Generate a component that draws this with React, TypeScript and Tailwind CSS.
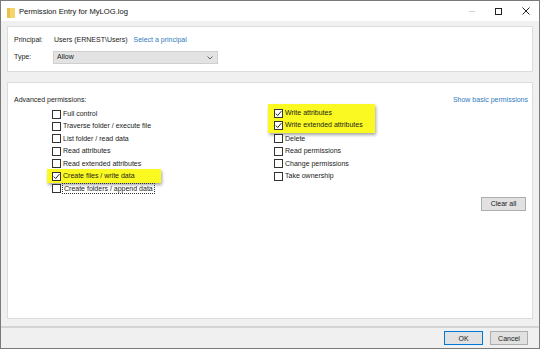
import React from 'react';

const leftPerms = [
  { label: 'Full control', checked: false },
  { label: 'Traverse folder / execute file', checked: false },
  { label: 'List folder / read data', checked: false },
  { label: 'Read attributes', checked: false },
  { label: 'Read extended attributes', checked: false },
  { label: 'Create files / write data', checked: true, mark: true },
  { label: 'Create folders / append data', checked: false, focus: true },
];

const rightTop = [
  { label: 'Write attributes', checked: true },
  { label: 'Write extended attributes', checked: true },
];

const rightRest = ['Delete', 'Read permissions', 'Change permissions', 'Take ownership'];

function Box({ checked }: { checked: boolean }) {
  return (
    <span className="w-[9px] h-[9px] border border-[#333333] bg-white flex items-center justify-center shrink-0">
      {checked && (
        <svg width="7" height="7" viewBox="0 0 7 7">
          <path d="M0.8 3.6 L2.7 5.5 L6.3 1.2" fill="none" stroke="#222" strokeWidth="1" />
        </svg>
      )}
    </span>
  );
}

function Row({ label, checked, focus }: { label: string; checked: boolean; focus?: boolean }) {
  return (
    <div className="h-[12.4px] flex items-center gap-[1px] whitespace-nowrap">
      <Box checked={checked} />
      <span className={focus ? 'border border-dotted border-[#333] leading-[9px] px-[1px]' : 'px-[1px]'}>{label}</span>
    </div>
  );
}

export default function App() {
  return (
    <div
      className="w-[540px] h-[349px] flex flex-col border border-[#7a7a7a] bg-[#f0f0f0] text-[7px] text-[#1a1a1a] overflow-hidden"
      style={{ fontFamily: '"Liberation Sans", Arial, sans-serif' }}
    >
      {/* title bar */}
      <div className="h-[20px] bg-white flex items-center shrink-0">
        <svg width="8" height="10" viewBox="0 0 8 10" className="ml-[6px] mt-[3px]">
          <rect x="0" y="0" width="8" height="10" fill="#f5d56b" />
          <rect x="0" y="0" width="3" height="10" fill="#e9c24a" />
        </svg>
        <span className="ml-[4px] mt-[2px] text-[7.6px] text-[#111]">Permission Entry for MyLOG.log</span>
        <div className="ml-auto flex items-center h-full">
          <div className="w-[27px] flex justify-center">
            <span className="w-[6px] h-px bg-[#d0d0d0]" />
          </div>
          <div className="w-[27px] flex justify-center">
            <span className="w-[7px] h-[7px] border border-[#222]" />
          </div>
          <div className="w-[27px] flex justify-center">
            <svg width="8" height="8" viewBox="0 0 8 8">
              <path d="M0.5 0.5 L7.5 7.5 M7.5 0.5 L0.5 7.5" stroke="#222" strokeWidth="1" />
            </svg>
          </div>
        </div>
      </div>

      {/* body */}
      <div className="flex-1 flex flex-col px-[6px] pt-[5px]">
        <div className="h-[46px] bg-white border border-[#dcdcdc] flex flex-col justify-center gap-[5px] px-[6px]">
          <div className="flex items-center h-[12px]">
            <span className="w-[40px]">Principal:</span>
            <span>Users (ERNEST\Users)</span>
            <span className="ml-[6px] text-[#2f7bc0]">Select a principal</span>
          </div>
          <div className="flex items-center">
            <span className="w-[39px]">Type:</span>
            <div className="w-[165px] h-[13px] bg-[#e3e3e3] border border-[#cfcfcf] flex items-center justify-between pl-[3px] pr-[4px]">
              <span>Allow</span>
              <svg width="6" height="4" viewBox="0 0 6 4">
                <path d="M0.5 0.5 L3 3 L5.5 0.5" fill="none" stroke="#555" strokeWidth="0.9" />
              </svg>
            </div>
          </div>
        </div>

        <div className="mt-[10px] h-[237px] bg-white border border-[#dcdcdc] flex flex-col">
          <div className="flex justify-between items-center pl-[6px] pr-[4px] pt-[11px] h-[24px]">
            <span>Advanced permissions:</span>
            <span className="text-[#2f7bc0]">Show basic permissions</span>
          </div>
          <div className="flex pl-[44px] pt-[1px]">
            <div className="w-[222px] flex flex-col">
              {leftPerms.map((p) =>
                p.mark ? (
                  <div
                    key={p.label}
                    className="-ml-[5px] pl-[5px] w-[114px] my-[-1px] py-[1px] bg-[#fafa22] shadow-[1px_2px_3px_rgba(0,0,0,0.35)]"
                  >
                    <Row label={p.label} checked={p.checked} />
                  </div>
                ) : (
                  <Row key={p.label} label={p.label} checked={p.checked} focus={p.focus} />
                )
              )}
            </div>
            <div className="flex flex-col">
              <div className="-ml-[6px] pl-[6px] w-[107px] -mt-[4px] pt-[3px] pb-[1px] bg-[#fafa22] shadow-[1px_2px_3px_rgba(0,0,0,0.35)]">
                {rightTop.map((p) => (
                  <Row key={p.label} label={p.label} checked={p.checked} />
                ))}
              </div>
              {rightRest.map((l) => (
                <Row key={l} label={l} checked={false} />
              ))}
            </div>
          </div>
          <div className="flex justify-end pr-[6px] mt-[2px]">
            <button className="w-[45px] h-[14px] bg-[#e1e1e1] border border-[#adadad] text-[7px] leading-none">
              Clear all
            </button>
          </div>
        </div>
      </div>

      {/* footer */}
      <div className="mt-[7px] h-[23px] border-t-2 border-[#d4d4d4] flex items-center justify-end gap-[7px] pr-[11px] pb-[1px] shrink-0">
        <button className="w-[39px] h-[14px] bg-[#e1e1e1] border border-[#0078d7] text-[7px] leading-none">OK</button>
        <button className="w-[38px] h-[14px] bg-[#e1e1e1] border border-[#adadad] text-[7px] leading-none">Cancel</button>
      </div>
    </div>
  );
}
